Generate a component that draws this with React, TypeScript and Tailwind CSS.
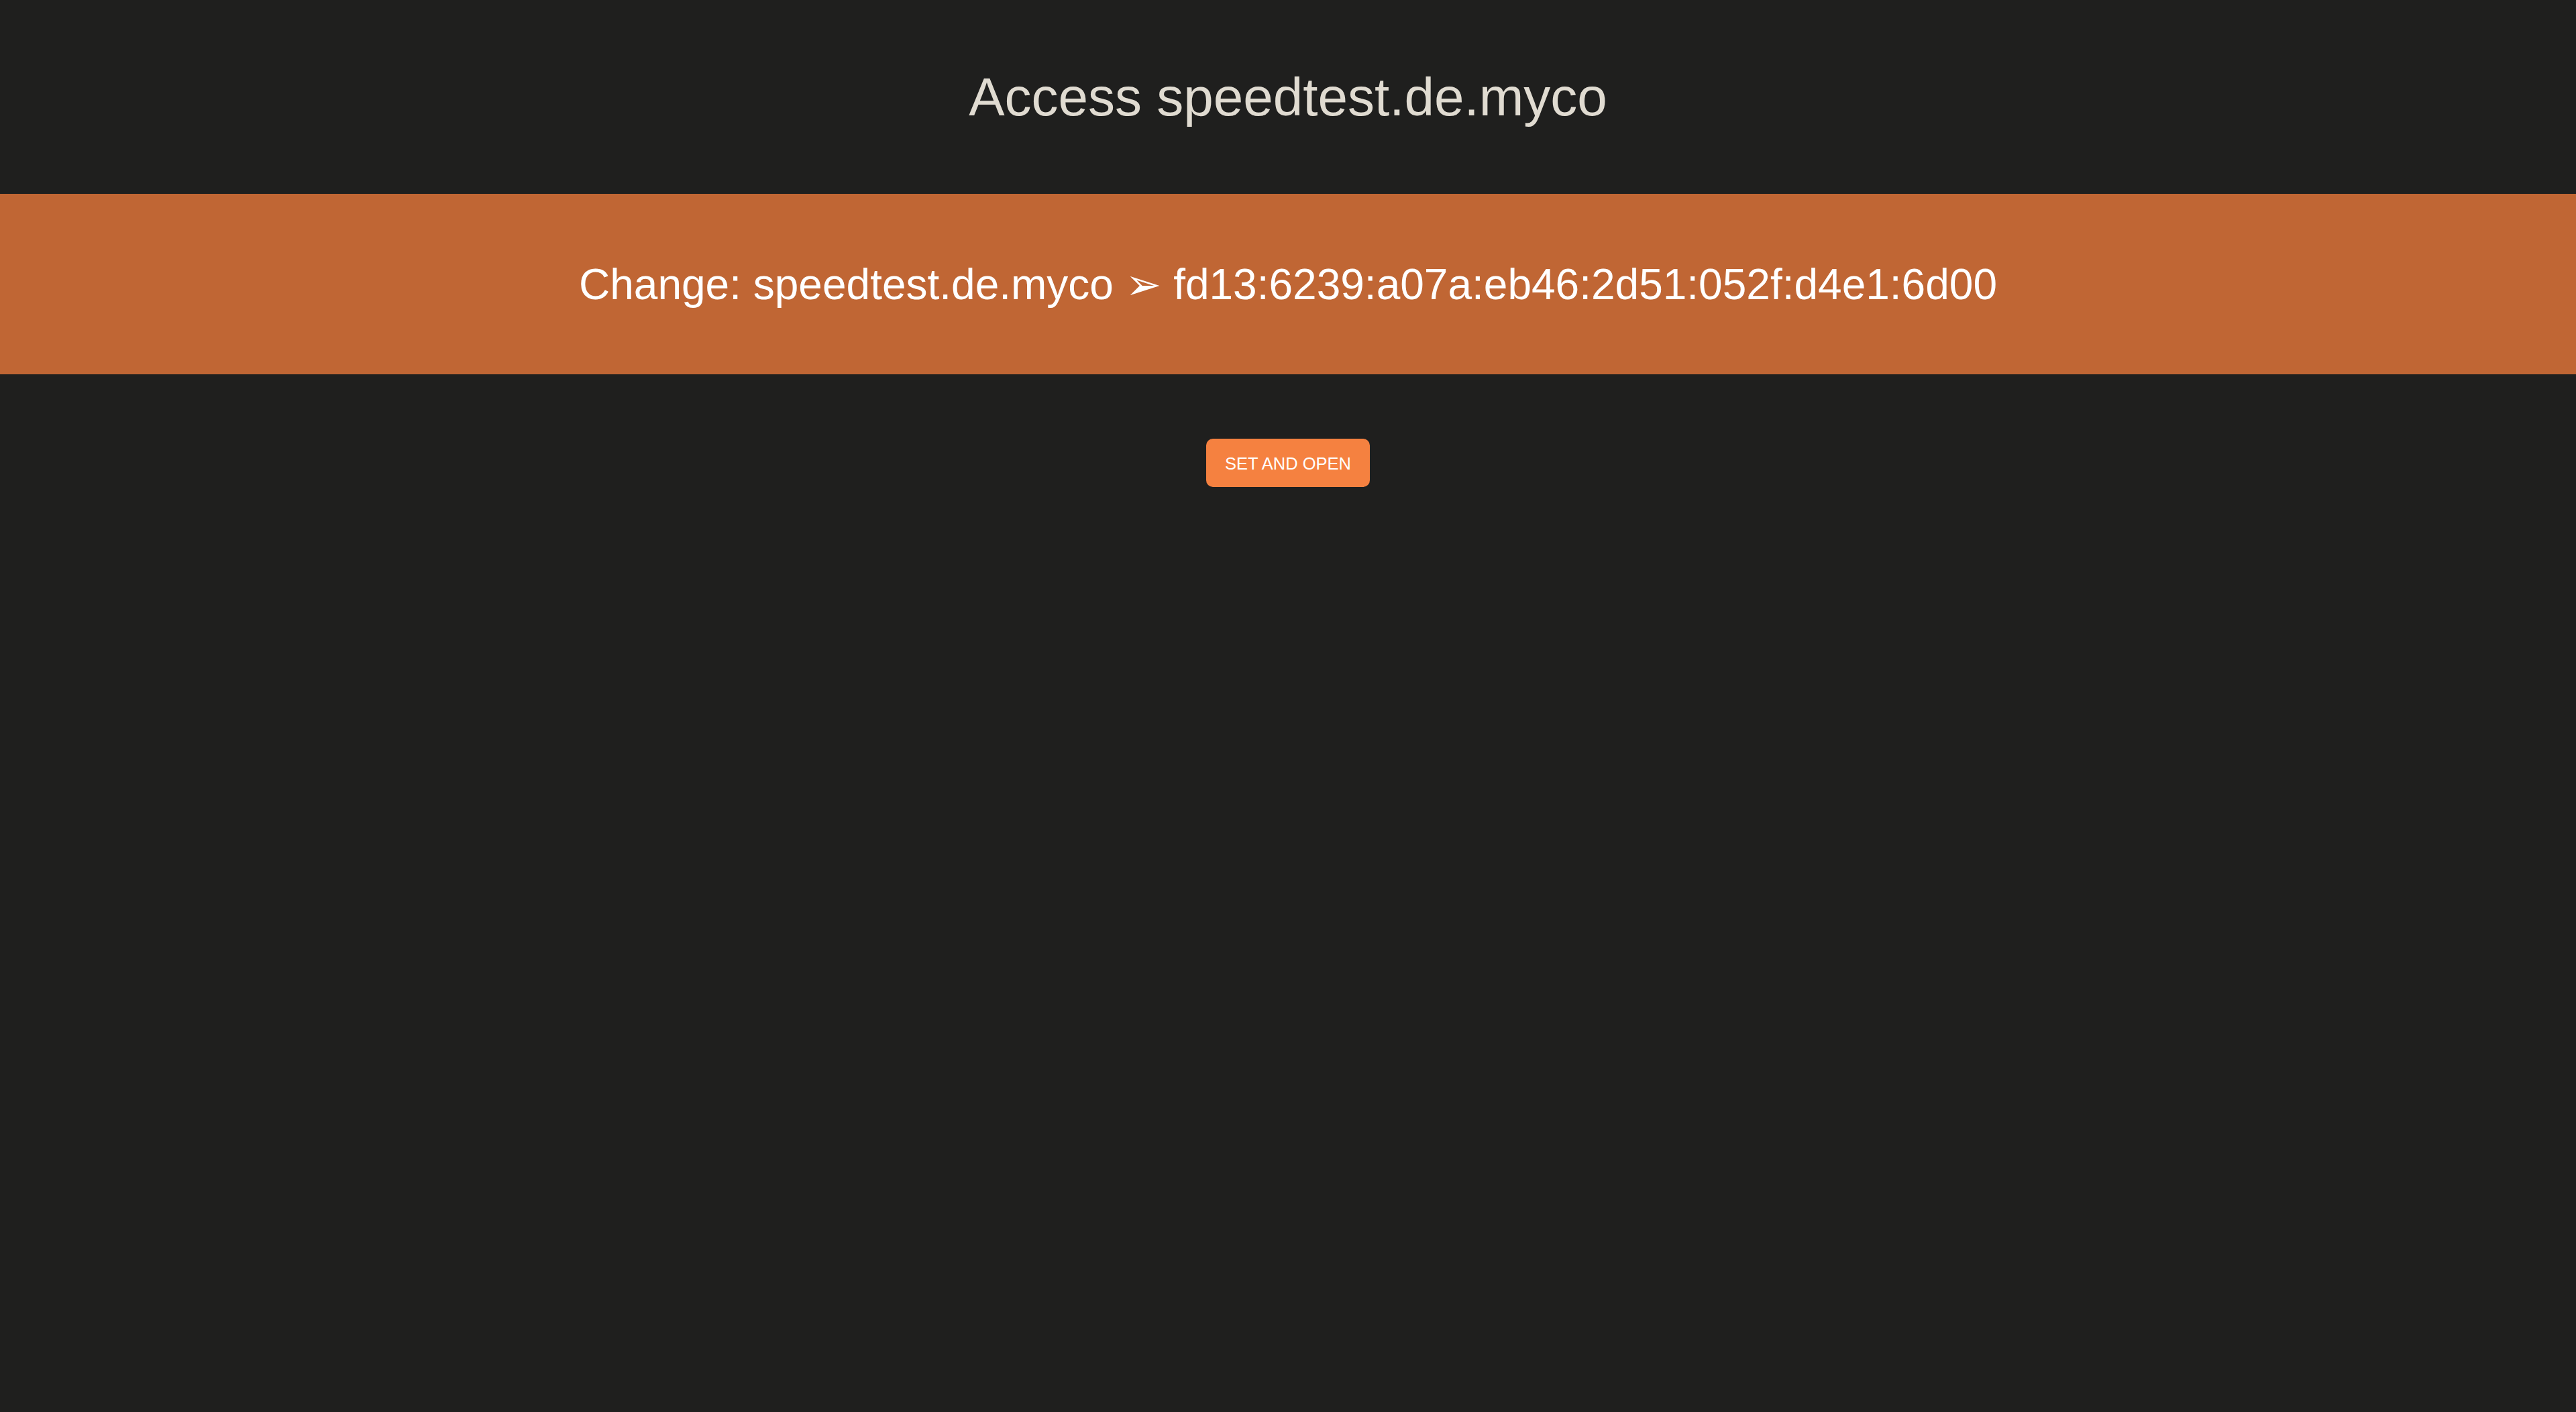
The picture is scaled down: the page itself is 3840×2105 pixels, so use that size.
export default function App() {
  return (
    <div className="min-h-screen bg-[#1f1f1e] font-['Liberation_Sans','DejaVu_Sans',sans-serif]">
      <header className="flex h-[289px] items-center justify-center">
        <h1 className="text-[80px] font-normal leading-[92px] text-[#e0dbd1]">Access speedtest.de.myco</h1>
      </header>

      <section className="flex h-[269px] items-center justify-center bg-[#c06634]">
        <p className="text-[64px] leading-[74px] text-white">
          Change: speedtest.de.myco ➢ fd13:6239:a07a:eb46:2d51:052f:d4e1:6d00
        </p>
      </section>

      <div className="flex justify-center pt-[96px]">
        <button className="flex h-[72px] w-[244px] items-center justify-center rounded-[10px] bg-[#f58140] pt-[2px] text-[25.5px] text-white">
          SET AND OPEN
        </button>
      </div>
    </div>
  )
}
